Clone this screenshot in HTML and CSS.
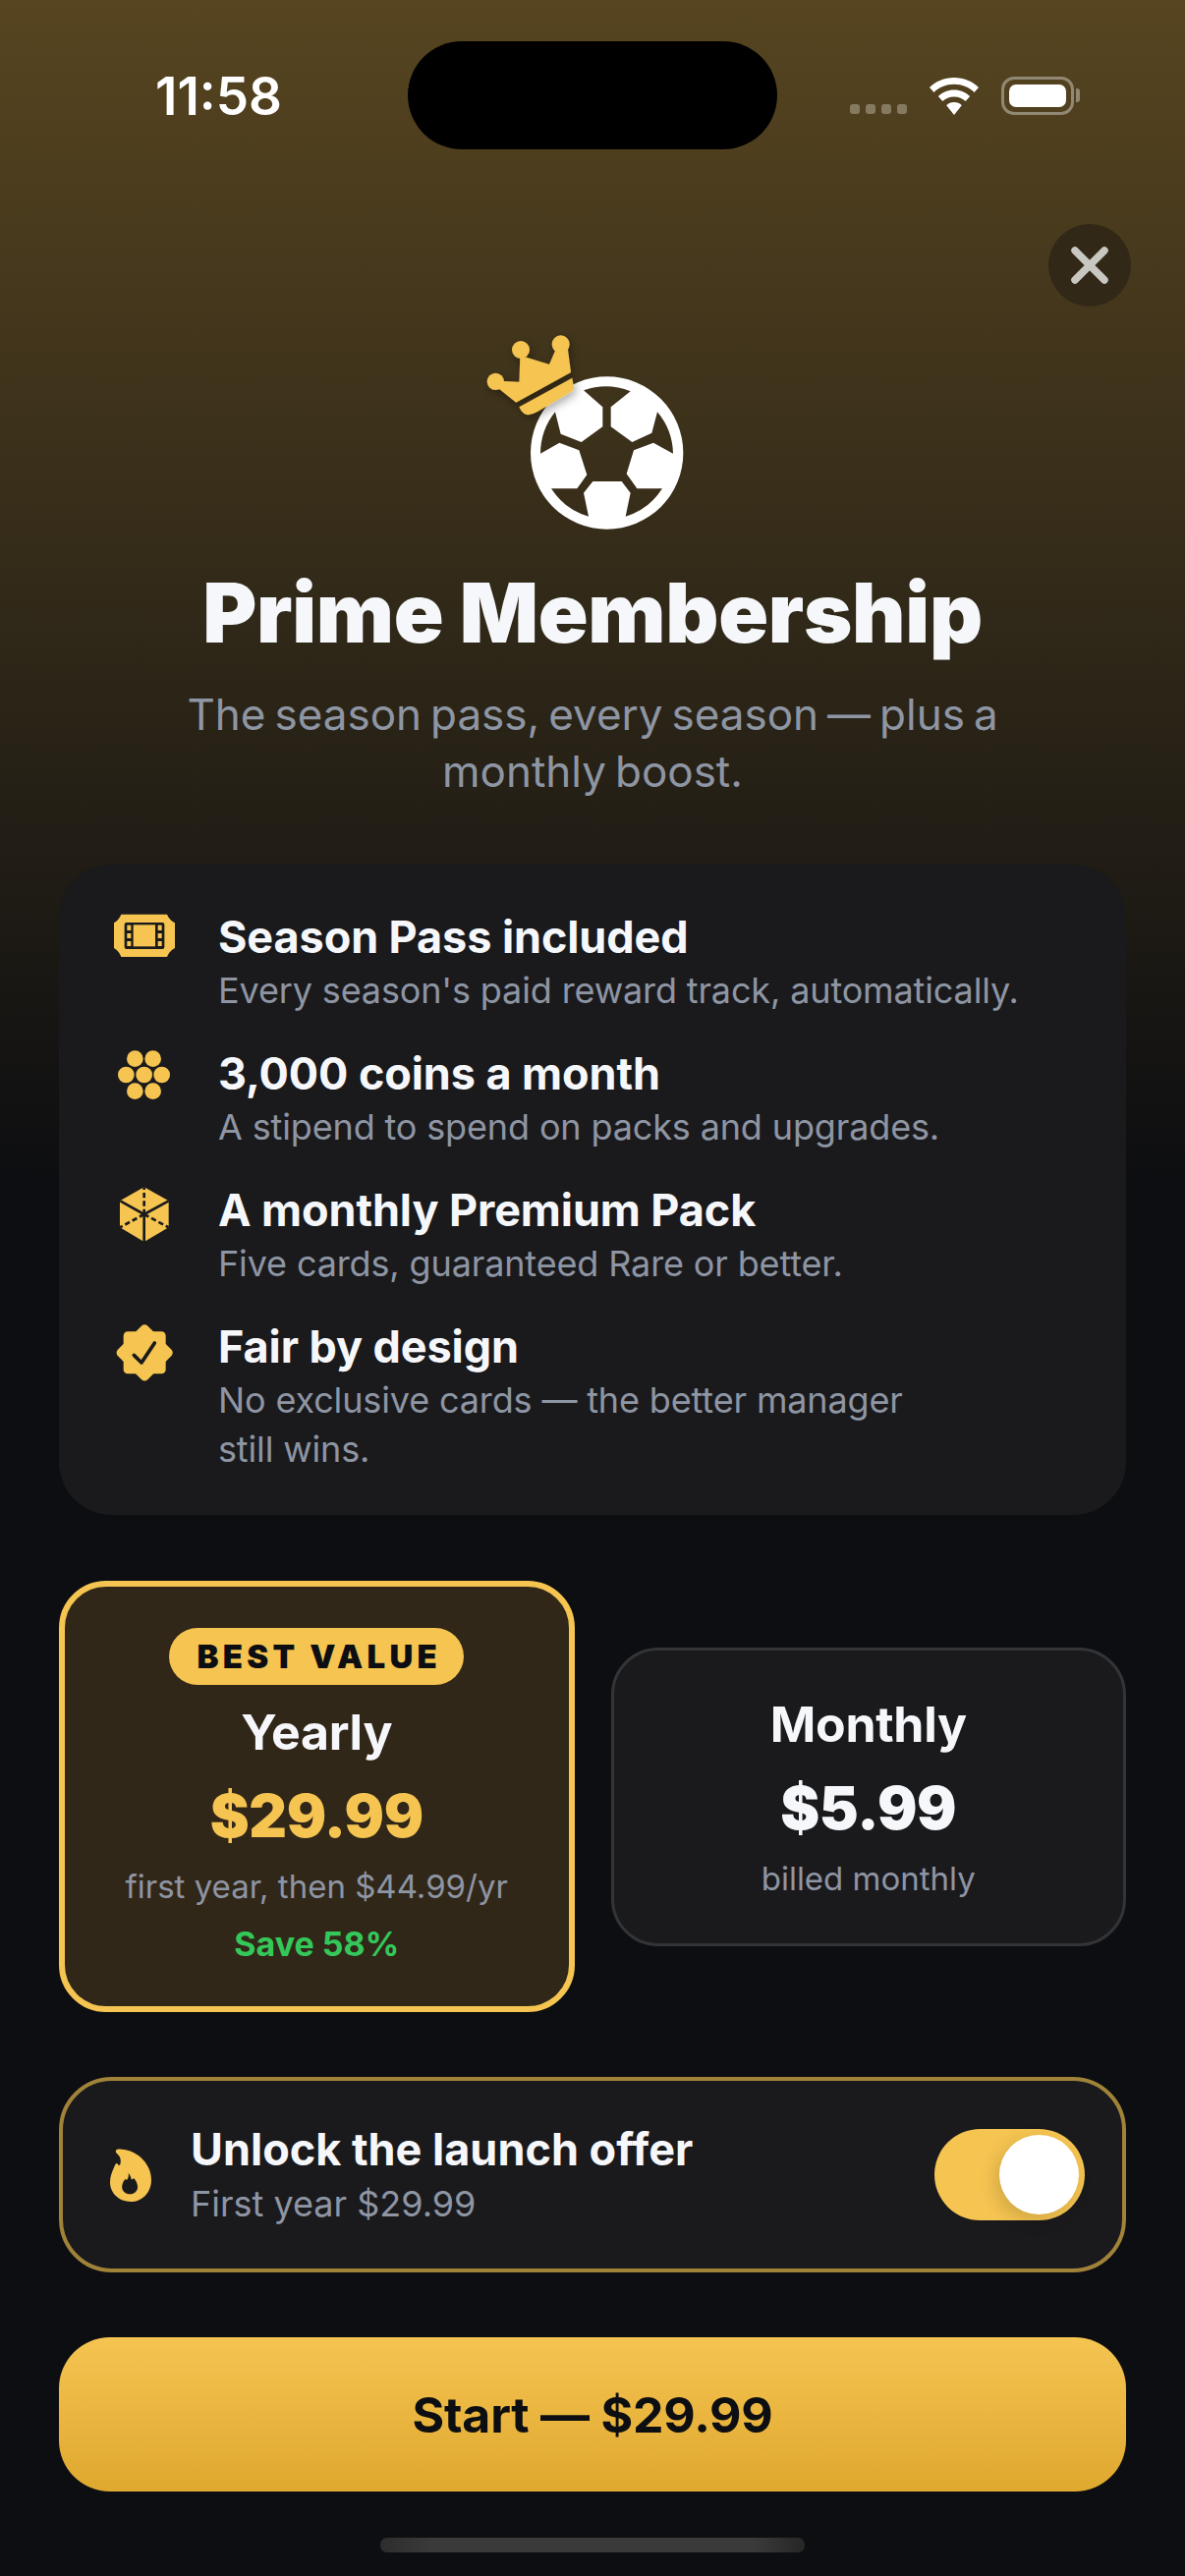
FILE: index.html
```html
<!DOCTYPE html>
<html lang="en">
<head>
<meta charset="utf-8">
<title>Prime Membership</title>
<link rel="stylesheet" href="styles.css">
</head>
<body>
<div class="screen">
  <header class="status">
    <span class="time">11:58</span>
    <div class="island"></div>
    <div class="status-right">
      <div class="dots"><i></i><i></i><i></i><i></i></div>
      <svg class="wifi" width="52" height="38" viewBox="0 0 52 38"><path fill="#fff" d="M26 0C16 0 7.500 3.800 1 10l4.500 5C10.800 9.800 18 6.800 26 6.800S41.200 9.800 46.500 15L51 10C44.500 3.800 36 0 26 0Z"/><path fill="#fff" d="M26 12.500c-6.300 0-12 2.500-16.200 6.600l4.500 5C17.300 21.200 21.400 19.400 26 19.400s8.700 1.800 11.700 4.700l4.500-5C38 15 32.300 12.500 26 12.500Z"/><path fill="#fff" d="M26 25c-3 0-5.800 1.200-7.800 3.200L26 38l7.800-9.800C31.800 26.200 29 25 26 25Z"/></svg>
      <div class="battery"><div class="battery-fill"></div></div>
      <div class="battery-nub"></div>
    </div>
  </header>

  <button class="close" aria-label="Close">
    <svg width="40" height="40" viewBox="0 0 40 40"><path d="M5 5 35 35M35 5 5 35" stroke="#c9c7c1" stroke-width="7.500" stroke-linecap="round"/></svg>
  </button>

  <section class="hero">
    <svg class="logo" width="300" height="240" viewBox="0 0 900 720">
      <defs>
        <filter id="crownShadow" x="-30%" y="-30%" width="160%" height="160%"><feDropShadow dx="6" dy="10" stdDeviation="14" flood-color="#000" flood-opacity=".35"/></filter>
      </defs>
      <path fill="#fff" fill-rule="evenodd" d="M503 190a233 233 0 1 0 0 466a233 233 0 1 0 0-466Z M432 232A204 204 0 0 1 575 235L515 283V343L580 390 640 362 657 298A204 204 0 0 1 705 425L645 392 585 415 563 487 595 532H672A204 204 0 0 1 560 617L575 545 548 510H460L432 545 447 617A204 204 0 0 1 333 532H412L442 490 418 415 358 392 300 425A204 204 0 0 1 345 298L362 365 425 390 490 343V283Z"/>
      <g fill="#f5c451" filter="url(#crownShadow)">
        <circle cx="240" cy="108" r="27"/>
        <circle cx="362" cy="91" r="27"/>
        <circle cx="163" cy="205" r="26"/>
        <path d="M170 205 237 208 240 128 328 155 352 100 382 108 391 176 226 267 170 222Z" stroke="#f5c451" stroke-width="4" stroke-linejoin="round"/>
        <path d="M235 283 397 194 402 222Q403 232 392 238L290 298Q265 312 250 303Q240 296 235 283Z"/>
      </g>
    </svg>
    <h1 class="title">Prime Membership</h1>
    <p class="subtitle">The season pass, every season — plus a<br>monthly boost.</p>
  </section>

  <main class="content">
    <section class="features">
      <div class="feature">
        <svg class="feature-icon" width="72" height="72" viewBox="63 48 216 216">
          <path fill="#f5c451" d="M100 92H240Q246 108 264 118V195Q246 205 240 222H100Q94 205 78 195V118Q94 108 100 92Z"/>
          <rect x="110" y="117" width="122" height="81" rx="6" fill="#1a1a1d"/>
          <g fill="#f5c451">
            <rect x="118" y="125" width="12" height="16"/><rect x="118" y="150" width="12" height="15"/><rect x="118" y="174" width="12" height="15"/>
            <rect x="212" y="125" width="12" height="16"/><rect x="212" y="150" width="12" height="15"/><rect x="212" y="174" width="12" height="15"/>
            <rect x="137" y="124" width="67" height="66"/>
          </g>
        </svg>
        <div class="feature-text">
          <h3 class="feature-title">Season Pass included</h3>
          <p class="feature-desc">Every season's paid reward track, automatically.</p>
        </div>
      </div>
      <div class="feature">
        <svg class="feature-icon" width="72" height="72" viewBox="63 45 216 216">
          <g fill="#f5c451">
            <circle cx="142" cy="113" r="25"/><circle cx="197" cy="113" r="25"/>
            <circle cx="115" cy="162" r="25"/><circle cx="170" cy="162" r="25"/><circle cx="224" cy="162" r="25"/>
            <circle cx="142" cy="212" r="25"/><circle cx="197" cy="212" r="25"/>
          </g>
        </svg>
        <div class="feature-text">
          <h3 class="feature-title">3,000 coins a month</h3>
          <p class="feature-desc">A stipend to spend on packs and upgrades.</p>
        </div>
      </div>
      <div class="feature">
        <svg class="feature-icon" width="72" height="72" viewBox="63 42 216 216">
          <path fill="#f5c451" d="M170 85 245 127V208L170 252 96 208V127Z"/>
          <path d="M170 168 97 127M170 168 245 127M170 168V252" stroke="#1a1a1d" stroke-width="8" fill="none"/>
          <path d="M170 168V85M170 168 96 208M170 168 245 208" stroke="#1a1a1d" stroke-width="8" stroke-dasharray="16 9" fill="none"/>
        </svg>
        <div class="feature-text">
          <h3 class="feature-title">A monthly Premium Pack</h3>
          <p class="feature-desc">Five cards, guaranteed Rare or better.</p>
        </div>
      </div>
      <div class="feature">
        <svg class="feature-icon" width="72" height="72" viewBox="63 459 216 216">
          <g fill="#f5c451">
            <rect x="107" y="526" width="129" height="129" rx="13"/>
            <rect x="107" y="526" width="129" height="129" rx="13" transform="rotate(45 171.500 590.500)"/>
          </g>
          <path d="M139 598 162 621 202 561" fill="none" stroke="#1a1a1d" stroke-width="11" stroke-linecap="round" stroke-linejoin="round"/>
        </svg>
        <div class="feature-text">
          <h3 class="feature-title">Fair by design</h3>
          <p class="feature-desc">No exclusive cards — the better manager<br>still wins.</p>
        </div>
      </div>
    </section>

    <section class="plans">
      <div class="plan plan-selected">
        <span class="badge">BEST VALUE</span>
        <h3 class="plan-name">Yearly</h3>
        <div class="plan-price plan-price-gold">$29.99</div>
        <div class="plan-note">first year, then $44.99/yr</div>
        <div class="plan-save">Save 58%</div>
      </div>
      <div class="plan">
        <h3 class="plan-name">Monthly</h3>
        <div class="plan-price">$5.99</div>
        <div class="plan-note">billed monthly</div>
      </div>
    </section>

    <section class="offer">
      <svg class="flame" width="42" height="54" viewBox="37 33 124 162" preserveAspectRatio="none">
        <path fill="#f5c451" fill-rule="evenodd" d="M54 41C54 35 62 34 72 35C120 38 161 80 161 128C161 168 133 195 99 195C65 195 37 170 37 136C37 118 43 104 50 88C52 82 54 78 57 78C60 78 62 84 64 84C69 84 71 70 66 58C62 50 54 47 54 41ZM92 107C94 114 92 122 88 128C85 128 82 126 81 128C76 134 73 142 73 150C73 163 84 172 97 172C110 172 120 162 120 150C120 140 114 130 109 124C106 124 104 128 101 127C100 120 97 112 92 107Z"/>
      </svg>
      <div class="offer-text">
        <h3 class="offer-title">Unlock the launch offer</h3>
        <p class="offer-sub">First year $29.99</p>
      </div>
      <div class="toggle"><div class="knob"></div></div>
    </section>

    <button class="cta">Start — $29.99</button>
  </main>

  <div class="home-bar"></div>
</div>
</body>
</html>
```
FILE: styles.css
```css
* { box-sizing: border-box; }
html, body { margin: 0; padding: 0; }
body { background: #0d0e11; font-family: "Inter", "Liberation Sans", sans-serif; color: #f5f7fa; }
h1, h3, p { margin: 0; }

.screen {
  position: relative;
  width: 1206px;
  height: 2622px;
  overflow: hidden;
  display: flex;
  flex-direction: column;
  background: linear-gradient(180deg, #574520 0, #0d0e11 1200px);
}

.status {
  position: relative;
  height: 152px;
  padding-top: 42px;
  flex: none;
}
.time {
  position: absolute;
  left: 158px;
  top: 68px;
  font-size: 53px;
  line-height: 60px;
  font-weight: 600;
  color: #fff;
}
.island {
  position: absolute;
  left: 415px;
  top: 42px;
  width: 376px;
  height: 110px;
  border-radius: 55px;
  background: #000;
}
.status-right {
  position: absolute;
  left: 865px;
  top: 78px;
  display: flex;
  align-items: flex-start;
}
.dots { display: flex; gap: 6px; margin-top: 28px; }
.dots i { display: block; width: 10px; height: 10px; border-radius: 3px; background: #857a60; }
.wifi { margin: 1px 0 0 22px; }
.battery {
  margin-left: 22px;
  width: 74px;
  height: 39px;
  padding: 5px;
  border: 3px solid #918873;
  border-radius: 13px;
}
.battery-fill { width: 100%; height: 100%; background: #fff; border-radius: 7px; }
.battery-nub { width: 4px; height: 14px; margin: 12px 0 0 2px; background: #918873; border-radius: 0 3px 3px 0; }

.close {
  position: absolute;
  left: 1067px;
  top: 228px;
  width: 84px;
  height: 84px;
  padding: 0;
  border: 0;
  border-radius: 50%;
  background: #322817;
  display: flex;
  align-items: center;
  justify-content: center;
}

.hero {
  flex: none;
  display: flex;
  flex-direction: column;
  align-items: center;
  padding-top: 168px;
}
.logo { display: block; margin-right: 6px; }
.title {
  margin-top: 14px;
  font-size: 84px;
  line-height: 100px;
  font-weight: 900;
  letter-spacing: -.3px;
  color: #f5f7fa;
}
.subtitle {
  margin-top: 24px;
  margin-bottom: 1px;
  font-size: 44px;
  line-height: 58px;
  font-weight: 400;
  word-spacing: -3.4px;
  color: #8e95a3;
  text-align: center;
}

.content {
  padding: 65px 60px 0;
  display: flex;
  flex-direction: column;
  gap: 66px;
}

.features {
  height: 662px;
  margin-bottom: 1px;
  padding: 43px 40px 0 51px;
  border-radius: 54px;
  background: #1a1a1d;
  display: flex;
  flex-direction: column;
  gap: 29px;
}
.feature { display: flex; align-items: flex-start; gap: 39px; }
.feature-icon { flex: none; margin-top: -7px; overflow: visible; }
.feature-title { padding-top: 2px; font-size: 45px; line-height: 58px; font-weight: 700; letter-spacing: -.1px; color: #f5f7fa; }
.feature-desc { font-size: 36px; line-height: 50px; font-weight: 400; letter-spacing: -.14px; color: #8e95a3; }

.plans { display: grid; grid-template-columns: 1fr 1fr; align-items: center; column-gap: 37px; }
.plan {
  display: flex;
  flex-direction: column;
  align-items: center;
  padding: 45px 0 37px;
  border: 3px solid #333438;
  border-radius: 48px;
  background: #1a1a1d;
  height: 304px;
}
.plan-selected {
  height: 439px;
  padding: 42px 0 40px;
  border: 6px solid #f5c451;
  background: #312719;
}
.badge {
  height: 58px;
  padding: 0 23px 0 28px;
  border-radius: 29px;
  background: #f5c451;
  color: #0d0e11;
  font-size: 33px;
  line-height: 58px;
  font-weight: 900;
  letter-spacing: 4.3px;
}
.plan-name { font-size: 50px; line-height: 60px; font-weight: 700; letter-spacing: -.3px; color: #f5f7fa; }
.plan-selected .plan-name { margin-top: 18px; }
.plan-price { margin-top: 18px; font-size: 60px; line-height: 74px; font-weight: 900; letter-spacing: -.45px; color: #f5f7fa; }
.plan-price-gold { color: #f5c451; }
.plan-note { margin-top: 10px; font-size: 33px; line-height: 50px; color: #8e95a3; }
.plan-selected .plan-note { margin-top: 10px; }
.plan-save { margin-top: 12px; font-size: 34px; line-height: 44px; font-weight: 700; color: #34c759; }

.offer {
  height: 199px;
  padding: 0 38px 0 48px;
  border: 4px solid #a08339;
  border-radius: 54px;
  background: #1a1a1d;
  display: flex;
  align-items: center;
}
.flame { flex: none; }
.offer-text { flex: 1; margin-left: 40px; }
.offer-title { font-size: 45px; line-height: 54px; font-weight: 700; color: #f5f7fa; }
.offer-sub { margin-top: 4px; font-size: 36px; line-height: 48px; color: #8e95a3; }
.toggle {
  flex: none;
  position: relative;
  width: 153px;
  height: 93px;
  border-radius: 47px;
  background: #f5c451;
}
.knob {
  position: absolute;
  right: 6px;
  top: 6px;
  width: 81px;
  height: 81px;
  border-radius: 50%;
  background: #fff;
  box-shadow: -4px 6px 18px rgba(0, 0, 0, .15);
}

.cta {
  height: 157px;
  padding: 0;
  border: 0;
  border-radius: 52px;
  background: linear-gradient(180deg, #f5c451 0%, #dfa82f 100%);
  color: #0d0e11;
  font-family: inherit;
  font-size: 50px;
  font-weight: 700;
  letter-spacing: -.2px;
}

.home-bar {
  position: absolute;
  left: 387px;
  top: 2583px;
  width: 432px;
  height: 15px;
  border-radius: 7px;
  background: linear-gradient(90deg, #2d2d2e, #3a3a3b 12%, #3a3a3b 88%, #262627);
}
```
